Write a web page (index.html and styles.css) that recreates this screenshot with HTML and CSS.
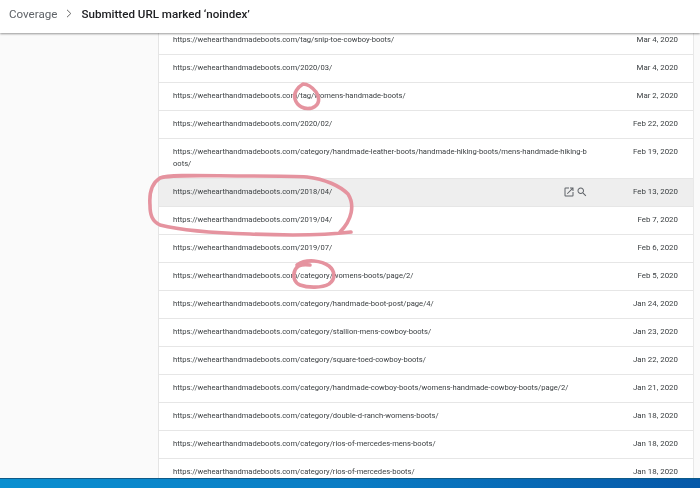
FILE: index.html
```html
<!DOCTYPE html>
<html lang="en">
<head>
<meta charset="utf-8">
<title>Coverage</title>
<link rel="stylesheet" href="styles.css">
</head>
<body>
<div class="page">
  <header class="header">
    <span class="crumb">Coverage</span>
    <svg class="chev" width="6" height="9" viewBox="0 0 6 9"><path d="M1 .8 4.8 4.5 1 8.2" fill="none" stroke="#666" stroke-width="1"/></svg>
    <span class="title">Submitted URL marked ‘noindex’</span>
  </header>
  <div class="content">
    <aside class="side"></aside>
    <main class="table">
      <div class="row first"><span class="url">https://wehearthandmadeboots.com/tag/snip-toe-cowboy-boots/</span><span class="date">Mar 4, 2020</span></div>
      <div class="row"><span class="url">https://wehearthandmadeboots.com/2020/03/</span><span class="date">Mar 4, 2020</span></div>
      <div class="row"><span class="url">https://wehearthandmadeboots.com/tag/womens-handmade-boots/</span><span class="date">Mar 2, 2020</span></div>
      <div class="row"><span class="url">https://wehearthandmadeboots.com/2020/02/</span><span class="date">Feb 22, 2020</span></div>
      <div class="row tall"><span class="url">https://wehearthandmadeboots.com/category/handmade-leather-boots/handmade-hiking-boots/mens-handmade-hiking-b<br>oots/</span><span class="date">Feb 19, 2020</span></div>
      <div class="row hover"><span class="url">https://wehearthandmadeboots.com/2018/04/</span>
        <span class="icons">
          <svg width="12" height="12" viewBox="0 0 24 24"><path d="M19 19H5V5h7V3H5a2 2 0 0 0-2 2v14a2 2 0 0 0 2 2h14a2 2 0 0 0 2-2v-7h-2v7zM14 3v2h3.6l-9.8 9.8 1.4 1.4L19 6.4V10h2V3h-7z" fill="#5f6368"/></svg>
          <svg width="12" height="12" viewBox="0 0 24 24"><path d="M15.5 14h-.79l-.28-.27C15.41 12.59 16 11.11 16 9.5 16 5.91 13.09 3 9.5 3S3 5.91 3 9.5 5.91 16 9.5 16c1.61 0 3.09-.59 4.23-1.57l.27.28v.79l5 4.99L20.49 19l-4.99-5zm-6 0C7.01 14 5 11.99 5 9.5S7.01 5 9.5 5 14 7.01 14 9.5 11.99 14 9.5 14z" fill="#5f6368"/></svg>
        </span>
        <span class="date">Feb 13, 2020</span></div>
      <div class="row"><span class="url">https://wehearthandmadeboots.com/2019/04/</span><span class="date">Feb 7, 2020</span></div>
      <div class="row"><span class="url">https://wehearthandmadeboots.com/2019/07/</span><span class="date">Feb 6, 2020</span></div>
      <div class="row"><span class="url">https://wehearthandmadeboots.com/category/womens-boots/page/2/</span><span class="date">Feb 5, 2020</span></div>
      <div class="row"><span class="url">https://wehearthandmadeboots.com/category/handmade-boot-post/page/4/</span><span class="date">Jan 24, 2020</span></div>
      <div class="row"><span class="url">https://wehearthandmadeboots.com/category/stallion-mens-cowboy-boots/</span><span class="date">Jan 23, 2020</span></div>
      <div class="row"><span class="url">https://wehearthandmadeboots.com/category/square-toed-cowboy-boots/</span><span class="date">Jan 22, 2020</span></div>
      <div class="row"><span class="url">https://wehearthandmadeboots.com/category/handmade-cowboy-boots/womens-handmade-cowboy-boots/page/2/</span><span class="date">Jan 21, 2020</span></div>
      <div class="row"><span class="url">https://wehearthandmadeboots.com/category/double-d-ranch-womens-boots/</span><span class="date">Jan 18, 2020</span></div>
      <div class="row"><span class="url">https://wehearthandmadeboots.com/category/rios-of-mercedes-mens-boots/</span><span class="date">Jan 18, 2020</span></div>
      <div class="row"><span class="url">https://wehearthandmadeboots.com/category/rios-of-mercedes-boots/</span><span class="date">Jan 18, 2020</span></div>
    </main>
    <aside class="side-right"></aside>
  </div>
  <footer class="taskbar"></footer>
  <svg class="ink" width="700" height="488" viewBox="0 0 700 488">
    <g fill="none" stroke="#e5939f" stroke-width="3.6" stroke-linecap="round" stroke-linejoin="round">
      <path d="M316 92C320 98 320 105 312 108C304 110 297 106 295 99C293 93 298 87 303 84C307 84 312 87 316 92"/>
      <path d="M351 232C335 234 300 236 250 234C215 233 180 230 160 225C152 221 150 215 150 205C149 192 152 183 160 178C170 174 210 176 250 176C275 176 295 176 307 177C325 179 340 186 348 194C355 205 352 220 340 232"/>
      <path d="M310 265C303 264 297 265 295 270C292 277 295 283 300 285C308 288 322 288 329 284C336 279 335 271 329 266C322 261 307 258 297 265"/>
    </g>
  </svg>
</div>
</body>
</html>
```

FILE: styles.css
```css
* { box-sizing: border-box; }
html, body { margin: 0; height: 100%; }
body { font-family: Roboto, "Liberation Sans", sans-serif; color: #3c4043; overflow: hidden; }
.page { position: relative; width: 700px; height: 488px; display: flex; flex-direction: column; overflow: hidden; background: #fafafa; filter: blur(.3px); }
.header { position: relative; z-index: 1; flex: 0 0 33px; display: flex; align-items: center; padding: 0 0 6px 9px; background: #fff; box-shadow: 0 1px 2px rgba(0,0,0,.4); }
.crumb { font-size: 11.6px; color: #5f6368; }
.chev { margin: 0 9px 0 9px; }
.title { font-size: 11.6px; font-weight: 500; color: #202124; }
.content { flex: 1; display: flex; min-height: 0; }
.side { flex: 0 0 159px; background: #fafafa; border-right: 1px solid #e4e4e4; }
.table { flex: 0 0 534px; background: #fff; overflow: hidden; }
.side-right { flex: 1; background: #fafafa; border-left: 1px solid #e8e8e8; }
.row { display: flex; align-items: center; height: 28px; padding: 0 15px 2px 14px; border-bottom: 1px solid #e6e6e6; font-size: 7.6px; line-height: 12px; color: #3c4043; }
.row.first { height: 22px; padding-bottom: 0; align-items: flex-start; padding-top: 1px; }
.row.tall { height: 40px; align-items: flex-start; padding-top: 7px; padding-bottom: 0; }
.row.hover { background: #eeeeee; }
.url { flex: 1; min-width: 0; }
.date { flex: 0 0 auto; margin-left: auto; font-size: 7.9px; }
.icons { display: flex; gap: 1px; margin-right: 45px; }
.taskbar { flex: 0 0 10px; background: linear-gradient(90deg, #0a8fd0 0%, #0a7cc4 50%, #0658a8 100%); border-top: 1px solid #0d5a88; }
.ink { position: absolute; left: 0; top: 0; pointer-events: none; }
```
